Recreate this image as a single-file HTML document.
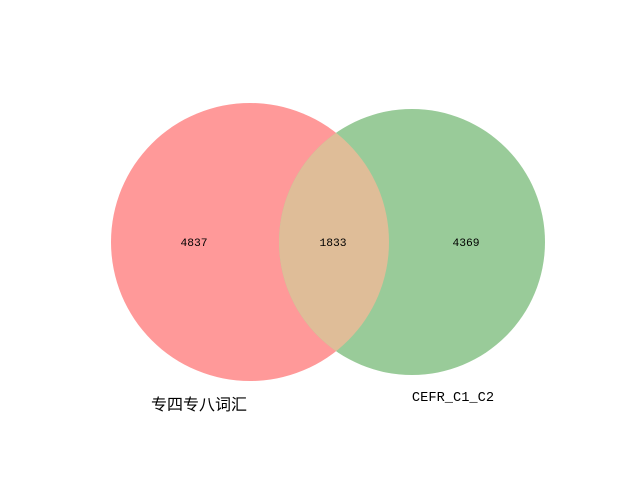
<!DOCTYPE html>
<html><head><meta charset="utf-8"><style>
html,body{margin:0;padding:0;background:#fff;}
svg{display:block}
text{font-family:"Liberation Mono","WenQuanYi Zen Hei","Noto Sans CJK SC",monospace;}
.cjk{font-family:"WenQuanYi Zen Hei","Noto Sans CJK SC",sans-serif;}
</style></head><body>
<svg width="640" height="480" viewBox="0 0 640 480">
<defs><clipPath id="c"><circle cx="250" cy="242" r="139"/></clipPath></defs>
<rect width="640" height="480" fill="#fff"/>
<circle cx="250" cy="242" r="139" fill="#ff9999"/>
<circle cx="412" cy="242" r="133" fill="#99cb99"/>
<circle cx="412" cy="242" r="133" fill="#dfbd98" clip-path="url(#c)"/>
<text x="194" y="246" font-size="11.3" text-anchor="middle">4837</text>
<text x="333" y="246" font-size="11.3" text-anchor="middle">1833</text>
<text x="466" y="246" font-size="11.3" text-anchor="middle">4369</text>
<text class="cjk" x="199" y="410" font-size="16" text-anchor="middle">专四专八词汇</text>
<text x="453" y="401" font-size="13.7" text-anchor="middle">CEFR_C1_C2</text>
</svg>
</body></html>
